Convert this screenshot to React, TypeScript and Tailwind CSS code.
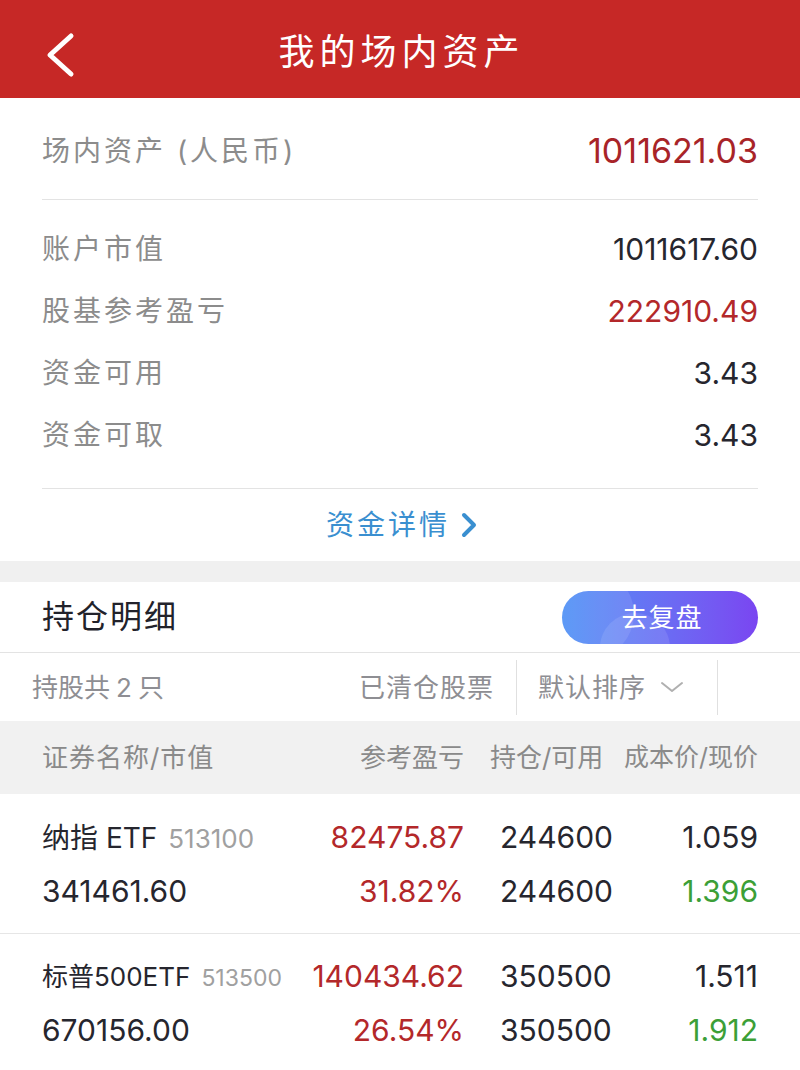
import React from "react";

const summary = [
  { label: "账户市值", value: "1011617.60", red: false },
  { label: "股基参考盈亏", value: "222910.49", red: true },
  { label: "资金可用", value: "3.43", red: false },
  { label: "资金可取", value: "3.43", red: false },
];

const holdings = [
  {
    name: "纳指 ETF",
    code: "513100",
    small: false,
    marketValue: "341461.60",
    profit: "82475.87",
    profitPct: "31.82%",
    hold: "244600",
    avail: "244600",
    cost: "1.059",
    price: "1.396",
  },
  {
    name: "标普500ETF",
    code: "513500",
    small: true,
    marketValue: "670156.00",
    profit: "140434.62",
    profitPct: "26.54%",
    hold: "350500",
    avail: "350500",
    cost: "1.511",
    price: "1.912",
  },
];

export default function App() {
  return (
    <div className="w-[800px] h-[1070px] overflow-hidden bg-white font-[family-name:Inter,'Noto_Sans_CJK_SC',sans-serif]">
      {/* Header */}
      <header className="relative h-[98px] bg-[#c62826] flex items-center justify-center">
        <svg className="absolute left-[42px] top-[32px]" width="34" height="46" viewBox="0 0 34 46">
          <path d="M29 4 L8 23 L29 42" fill="none" stroke="white" strokeWidth="5" strokeLinecap="round" strokeLinejoin="round" />
        </svg>
        <h1 className="text-white text-[36px] tracking-[5px] pl-[3px] pt-[6px]">我的场内资产</h1>
      </header>

      {/* Summary */}
      <section className="px-[42px]">
        <div className="h-[102px] flex items-center justify-between pt-[4px] border-b border-[#e3e3e3]">
          <span className="text-[28px] text-[#8c8c8c] tracking-[3px]">场内资产 (人民币)</span>
          <span className="text-[34px] text-[#a82428]">1011621.03</span>
        </div>
        <div className="pt-[18px] pb-[22px] border-b border-[#e3e3e3]">
          {summary.map((row) => (
            <div key={row.label} className="h-[62px] flex items-center justify-between">
              <span className="text-[28px] text-[#8c8c8c] tracking-[3px]">{row.label}</span>
              <span className={row.red ? "text-[30px] text-[#b3282a]" : "text-[30px] text-[#26262e]"}>
                {row.value}
              </span>
            </div>
          ))}
        </div>
        <div className="h-[72px] flex items-center justify-center gap-[10px] pl-[4px] text-[#3a8fd0]">
          <span className="text-[28px] tracking-[3px]">资金详情</span>
          <svg width="18" height="28" viewBox="0 0 18 28">
            <path d="M4 4 L14 14 L4 24" fill="none" stroke="#3a8fd0" strokeWidth="4" strokeLinecap="round" strokeLinejoin="round" />
          </svg>
        </div>
      </section>

      <div className="h-[21px] bg-[#f0f0f0]" />

      {/* Holdings title */}
      <div className="h-[71px] px-[42px] flex items-center justify-between border-b border-[#e3e3e3]">
        <span className="text-[32px] text-[#22222a] tracking-[2px]">持仓明细</span>
        <button className="relative overflow-hidden w-[196px] h-[53px] rounded-full bg-gradient-to-r from-[#4a8ff5] to-[#7a45f1] text-white text-[26px] tracking-[1px]">
          <span className="absolute -left-[18px] -top-[22px] w-[90px] h-[90px] rounded-full bg-white/10" />
          <span className="absolute left-[38px] top-[22px] w-[70px] h-[70px] rounded-full bg-white/10" />
          <span className="relative pl-[4px]">去复盘</span>
        </button>
      </div>

      {/* Filter row */}
      <div className="h-[68px] flex items-center text-[26px] text-[#8e8e93]">
        <span className="pl-[32px] flex-1 flex items-center">
          持股共<span className="mx-[6px]">2</span>只
        </span>
        <span className="pr-[22px] tracking-[1px]">已清仓股票</span>
        <div className="w-px h-[55px] bg-[#e0e0e0]" />
        <div className="w-[200px] pl-[21px] flex items-center gap-[14px]">
          <span className="tracking-[1px]">默认排序</span>
          <svg width="24" height="14" viewBox="0 0 24 14">
            <path d="M2 3 L12 11 L22 3" fill="none" stroke="#b0b0b0" strokeWidth="2" strokeLinecap="round" strokeLinejoin="round" />
          </svg>
        </div>
        <div className="w-px h-[55px] bg-[#e0e0e0]" />
        <div className="w-[82px]" />
      </div>

      {/* Table header */}
      <div className="h-[73px] bg-[#f1f1f1] flex items-center px-[42px] text-[26px] text-[#8a8a8a]">
        <span className="flex-1 tracking-[1px]">证券名称/市值</span>
        <span className="w-[160px] text-right">参考盈亏</span>
        <span className="w-[158px] pl-[26px]">持仓/可用</span>
        <span className="w-[136px] text-right text-[25px]">成本价/现价</span>
      </div>

      {/* Holdings rows */}
      {holdings.map((h, i) => (
        <div
          key={h.code}
          className={i === 0 ? "pt-[17px] pb-[15px] border-b border-[#e6e6e6]" : "pt-[16px]"}
        >
          <div className="h-[53px] flex items-center px-[42px] text-[30px]">
            <span className="flex-1 flex items-baseline gap-[11px] whitespace-nowrap">
              <span className={h.small ? "text-[26px] text-[#26262e]" : "text-[28px] text-[#26262e]"}>{h.name}</span>
              <span className={h.small ? "text-[23px] text-[#a0a0a0]" : "text-[26px] text-[#a0a0a0]"}>{h.code}</span>
            </span>
            <span className="w-[160px] text-right text-[#b3282a]">{h.profit}</span>
            <span className="w-[158px] pl-[36px] text-[#26262e]">{h.hold}</span>
            <span className="w-[136px] text-right text-[#26262e]">{h.cost}</span>
          </div>
          <div className="h-[54px] flex items-center px-[42px] text-[30px]">
            <span className="flex-1 text-[#26262e]">{h.marketValue}</span>
            <span className="w-[160px] text-right text-[#b3282a]">{h.profitPct}</span>
            <span className="w-[158px] pl-[36px] text-[#26262e]">{h.avail}</span>
            <span className="w-[136px] text-right text-[#3c9f37]">{h.price}</span>
          </div>
        </div>
      ))}
    </div>
  );
}
